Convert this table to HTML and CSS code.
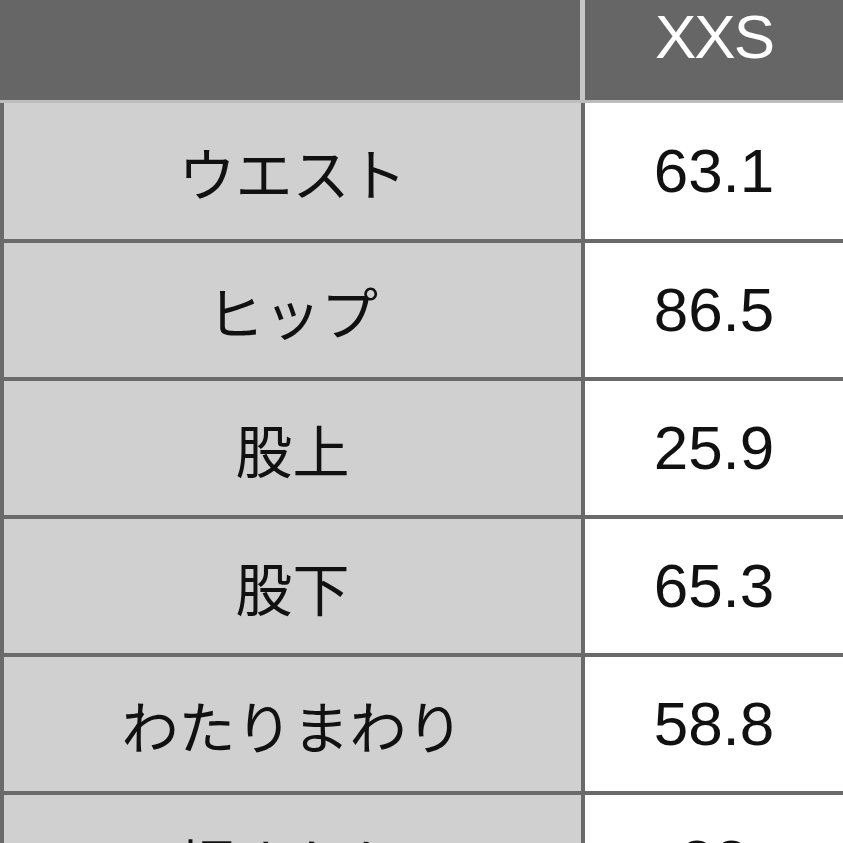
FILE: index.html
```html
<!DOCTYPE html>
<html lang="ja">
<head>
<meta charset="utf-8">
<title>サイズ表</title>
<link rel="stylesheet" href="styles.css">
</head>
<body>
<div class="table">
  <div class="header">
    <div class="h-label"></div>
    <div class="h-size">XXS</div>
  </div>
  <div class="rows">
    <div class="row">
      <div class="label">ウエスト</div>
      <div class="value">63.1</div>
    </div>
    <div class="row">
      <div class="label">ヒップ</div>
      <div class="value">86.5</div>
    </div>
    <div class="row">
      <div class="label">股上</div>
      <div class="value">25.9</div>
    </div>
    <div class="row">
      <div class="label">股下</div>
      <div class="value">65.3</div>
    </div>
    <div class="row">
      <div class="label">わたりまわり</div>
      <div class="value">58.8</div>
    </div>
    <div class="row">
      <div class="label">裾まわり</div>
      <div class="value">22</div>
    </div>
  </div>
</div>
</body>
</html>
```

FILE: styles.css
```css
html, body {
  margin: 0;
  padding: 0;
  background: #ffffff;
  overflow: hidden;
}

.table {
  width: 843px;
  display: flex;
  flex-direction: column;
}

.header {
  display: flex;
  height: 100px;
  background: #666666;
  border-bottom: 3px solid #bdbdbd;
}

.h-label {
  width: 580px;
}

.h-size {
  flex: 1;
  border-left: 5px solid #c6c6c6;
  display: flex;
  align-items: center;
  justify-content: center;
  padding-bottom: 26px;
  color: #ffffff;
  font-family: "Liberation Sans", Arial, sans-serif;
  font-size: 62px;
  line-height: 1;
  letter-spacing: -2px;
}

.rows {
  display: flex;
  flex-direction: column;
}

.row {
  display: flex;
  height: 134px;
  border-bottom: 4px solid #6a6a6a;
}

.row:first-child {
  height: 136px;
}

.label {
  width: 577px;
  border-left: 4px solid #6a6a6a;
  background: #d0d0d0;
  display: flex;
  align-items: center;
  justify-content: center;
  color: #111111;
  font-family: "Noto Sans CJK JP", "Noto Sans", sans-serif;
  font-size: 57px;
  line-height: 1;
}

.value {
  flex: 1;
  border-left: 4px solid #6a6a6a;
  background: #ffffff;
  display: flex;
  align-items: center;
  justify-content: center;
  color: #111111;
  font-family: "Liberation Sans", Arial, sans-serif;
  font-size: 62px;
  line-height: 1;
}
```
